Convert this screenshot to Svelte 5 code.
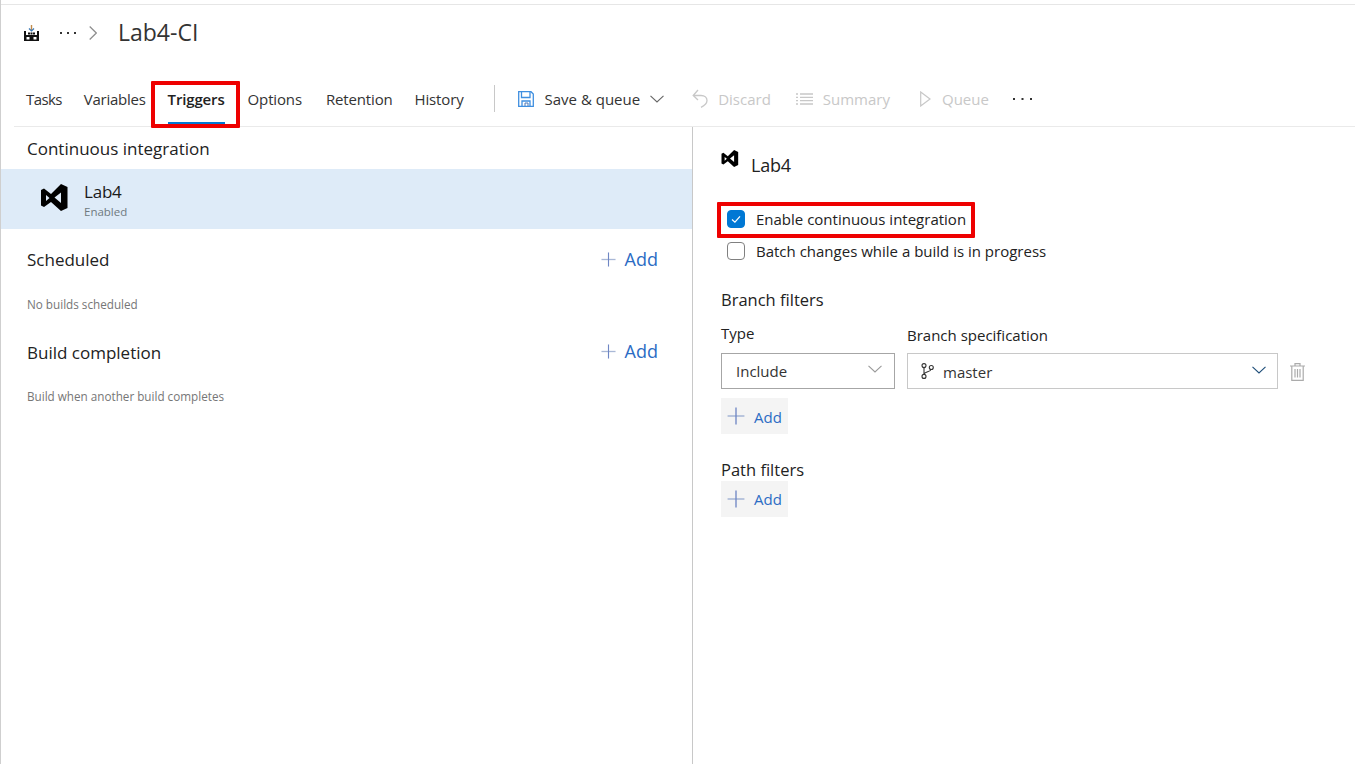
<script>
  const tabs = [
    { label: "Tasks" },
    { label: "Variables" },
    { label: "Triggers", active: true },
    { label: "Options" },
    { label: "Retention" },
    { label: "History" },
  ];
</script>

{#snippet vsLogo(cls)}
  <svg class={cls} viewBox="0 0 27 27" aria-hidden="true">
    <path fill="#000" fill-rule="evenodd" d="M20 0 L26.500 3 V24 L20 27 L10 18 L3 23 L0 21.500 V6 L3 4.500 L10 10 Z M20 8.500 L13.500 13.500 L20 19 Z M5 11 V17 L8.500 14 Z"/>
  </svg>
{/snippet}

{#snippet plus()}
  <svg class="plus" viewBox="0 0 16 16" aria-hidden="true">
    <path d="M0.500 8 H15.500" stroke="#a9b8d6" stroke-width="1.400"/>
    <path d="M8 0.500 V15.500" stroke="#6f86c4" stroke-width="1.200"/>
  </svg>
{/snippet}

{#snippet chevron(color)}
  <svg class="chev" viewBox="0 0 14 8" aria-hidden="true">
    <path d="M0.500 0.800 L7 7 L13.500 0.800" fill="none" stroke={color} stroke-width="1.100"/>
  </svg>
{/snippet}

<div class="page">
  <header class="crumbs">
    <svg class="build-icon" viewBox="0 0 15 16" aria-hidden="true">
      <path d="M7.500 0 V5.500" stroke="#c08a4a" stroke-width="1.400"/>
      <path d="M5 3.500 L7.500 6 L10 3.500" fill="none" stroke="#3a78b5" stroke-width="1.200"/>
      <path fill="#111" d="M0 6 H2 V10 H13 V6 H15 V16 H0 Z M4 7.500 h2 v2 h-2 z M6.500 7.500 h2 v2 h-2 z M9 7.500 h2 v2 h-2 z"/>
      <path fill="#fff" d="M2.500 12 h3 v2.500 h-3 z M9.500 12 h3 v2.500 h-3 z"/>
    </svg>
    <svg class="crumb-more" viewBox="0 0 16 2" aria-hidden="true">
      <path fill="#333" d="M0 0 h2 v2 h-2 z M7 0 h2 v2 h-2 z M14 0 h2 v2 h-2 z"/>
    </svg>
    <svg class="crumb-sep" viewBox="0 0 8 14" aria-hidden="true">
      <path d="M0.700 0.500 L7.300 7 L0.700 13.500" fill="none" stroke="#8d8d8d" stroke-width="1.200"/>
    </svg>
    <span class="title">Lab4-CI</span>
  </header>

  <nav class="toolbar">
    <div class="tabs">
      {#each tabs as tab}
        <div class="tab" class:active={tab.active}>{tab.label}</div>
      {/each}
    </div>
    <div class="divider"></div>
    <div class="actions">
      <div class="action save">
        <svg class="act-icon" viewBox="0 0 16 16" aria-hidden="true">
          <g fill="none" stroke="#3f8fe0" stroke-width="1.300">
            <path d="M0.700 0.700 H13 L15.300 3 V15.300 H0.700 Z"/>
            <path d="M3.500 1 V6.500 H12 V1"/>
            <path d="M4 15 V10 H12 V15"/>
            <path d="M7 15 V12 H10 V15" stroke="#4d79b8" stroke-width="1"/>
          </g>
        </svg>
        <span>Save &amp; queue</span>
        {@render chevron("#666")}
      </div>
      <div class="action off discard">
        <svg class="act-icon" viewBox="0 0 16 19" aria-hidden="true">
          <path d="M1.500 6.500 H9 C13 6.500 15 9 15 11.500 C15 14.500 12.500 16.500 9 18.300 M6 1 L1.200 6.500 L6 11" fill="none" stroke="#c8c8c8" stroke-width="1.300"/>
        </svg>
        <span>Discard</span>
      </div>
      <div class="action off summary">
        <svg class="act-icon" viewBox="0 0 17 12" aria-hidden="true">
          <path d="M0 1 H2 M4 1 H17 M0 4.300 H2 M4 4.300 H17 M0 7.600 H2 M4 7.600 H17 M0 11 H2 M4 11 H17" stroke="#c8c8c8" stroke-width="1.300"/>
        </svg>
        <span>Summary</span>
      </div>
      <div class="action off queue">
        <svg class="act-icon" viewBox="0 0 11 16" aria-hidden="true">
          <path d="M0.700 1 L10 8 L0.700 15 Z" fill="none" stroke="#c8c8c8" stroke-width="1.200"/>
        </svg>
        <span>Queue</span>
      </div>
      <svg class="tool-more" viewBox="0 0 19 2" aria-hidden="true">
        <path fill="#333" d="M0 0 h2 v2 h-2 z M8.500 0 h2 v2 h-2 z M17 0 h2 v2 h-2 z"/>
      </svg>
    </div>
  </nav>

  <main class="split">
    <section class="left">
      <h2 class="left-head ci-head">Continuous integration</h2>
      <div class="ci-row">
        {@render vsLogo("vs-big")}
        <div class="ci-text">
          <div class="ci-name">Lab4</div>
          <div class="ci-state">Enabled</div>
        </div>
      </div>

      <div class="group scheduled">
        <div class="group-head">
          <h2 class="left-head">Scheduled</h2>
          <div class="add-link">{@render plus()}<span>Add</span></div>
        </div>
        <p class="hint">No builds scheduled</p>
      </div>

      <div class="group completion">
        <div class="group-head">
          <h2 class="left-head">Build completion</h2>
          <div class="add-link">{@render plus()}<span>Add</span></div>
        </div>
        <p class="hint">Build when another build completes</p>
      </div>
    </section>

    <section class="right">
      <div class="detail-head">
        {@render vsLogo("vs-small")}
        <span>Lab4</span>
      </div>

      <label class="check first">
        <span class="box on">
          <svg viewBox="0 0 18 18" aria-hidden="true"><path d="M4.500 9.500 L7.800 12.500 L13.500 6" fill="none" stroke="#fff" stroke-width="1.400"/></svg>
        </span>
        <span>Enable continuous integration</span>
      </label>
      <label class="check second">
        <span class="box"></span>
        <span>Batch changes while a build is in progress</span>
      </label>

      <h3 class="sub-head branch-head">Branch filters</h3>
      <div class="filter-row">
        <div class="field type-field">
          <div class="field-label type-label">Type</div>
          <div class="select type-select">
            <span>Include</span>
            {@render chevron("#9a9a9a")}
          </div>
        </div>
        <div class="field branch-field">
          <div class="field-label">Branch specification</div>
          <div class="select branch-select">
            <svg class="branch-icon" viewBox="0 0 13 16" aria-hidden="true">
              <g fill="none" stroke="#333" stroke-width="1.100">
                <circle cx="3" cy="2.600" r="2"/>
                <circle cx="3" cy="13.400" r="2"/>
                <circle cx="10.300" cy="4.500" r="2"/>
                <path d="M3 4.600 V11.400 M10 6.500 C9.500 9 4 8.500 3 11"/>
              </g>
            </svg>
            <span>master</span>
            <span class="spacer"></span>
            {@render chevron("#1f4e79")}
          </div>
        </div>
        <svg class="trash" viewBox="0 0 15 18" aria-hidden="true">
          <g fill="none" stroke="#ababab" stroke-width="1.200">
            <path d="M0 3 H15 M5 3 V0.700 H10 V3 M1.800 3 V17.300 H13.200 V3"/>
            <path d="M5 6 V14.500 M7.500 6 V14.500 M10 6 V14.500"/>
          </g>
        </svg>
      </div>
      <div class="add-btn branch-add">{@render plus()}<span>Add</span></div>

      <h3 class="sub-head path-head">Path filters</h3>
      <div class="add-btn">{@render plus()}<span>Add</span></div>
    </section>
  </main>

  <div class="mark mark-tab"></div>
  <div class="mark mark-check"></div>
</div>

<style>
  :global(body) {
    margin: 0;
    background: #fff;
    font-family: "Open Sans", "Noto Sans", sans-serif;
    color: #222;
  }
  .page {
    position: relative;
    box-sizing: border-box;
    height: 764px;
    width: 1355px;
    overflow: hidden;
    padding-top: 4px;
    border-left: 1px solid #cfcfcf;
  }
  .crumbs {
    box-sizing: border-box;
    height: 57px;
    border-top: 1px solid #e6e6e6;
    margin-left: -1px;
    display: flex;
    align-items: center;
    padding: 0 0 0 24px;
  }
  .build-icon { width: 15px; height: 16px; margin-right: 21px; }
  .crumb-more { width: 16px; height: 2px; display: block; }
  .crumb-sep { width: 8px; height: 14px; margin: 0 21px 0 13px; }
  .title { font-size: 23px; color: #333; margin-top: -2px; }

  .toolbar {
    box-sizing: border-box;
    height: 66px;
    margin-left: 13px;
    border-bottom: 1px solid #eaeaea;
    display: flex;
    align-items: center;
    padding-top: 13px;
  }
  .tabs { display: flex; align-items: stretch; height: 48px; margin-left: 12px; }
  .tab {
    box-sizing: border-box;
    font-size: 15px;
    letter-spacing: -0.15px;
    color: #333;
    display: flex;
    align-items: center;
    position: relative;
    margin-right: 22px;
    padding-bottom: 2px;
  }
  .tab:nth-child(1) { letter-spacing: -0.6px; margin-right: 22px; }
  .tab:nth-child(2) { letter-spacing: -0.25px; }
  .tab:nth-child(3) { margin-right: 23px; }
  .tab:nth-child(4) { margin-right: 24px; }
  .tab.active { font-weight: 600; color: #222; }
  .tab.active::after {
    content: "";
    position: absolute;
    left: 0;
    right: 0;
    bottom: 0;
    height: 2px;
    background: #0078d4;
  }
  .divider { width: 1px; height: 27px; background: #c8c8c8; margin: -3px 23px 0 8px; }
  .actions { display: flex; align-items: center; font-size: 15px; margin-top: -2px; }
  .action { display: flex; align-items: center; color: #333; }
  .action.off { color: #c8c8c8; }
  .act-icon { display: block; }
  .save .act-icon { width: 16px; height: 16px; margin-right: 11px; }
  .chev { width: 14px; height: 8px; margin-left: 10px; display: block; }
  .discard { margin-left: 28px; }
  .discard .act-icon { width: 16px; height: 19px; margin-right: 10px; margin-top: -2px; }
  .summary { margin-left: 25px; }
  .summary .act-icon { width: 17px; height: 12px; margin-right: 10px; }
  .queue { margin-left: 30px; }
  .queue .act-icon { width: 11px; height: 16px; margin-right: 11px; }
  .tool-more { width: 19px; height: 2px; margin-left: 24px; display: block; }

  .split { display: flex; height: 637px; }
  .left {
    box-sizing: border-box;
    width: 692px;
    border-right: 1px solid #c8c8c8;
  }
  .left-head {
    margin: 0;
    font-size: 17px;
    font-weight: 400;
    color: #222;
    line-height: 24px;
  }
  .ci-head { padding: 10px 0 8px 26px; }
  .ci-row {
    height: 60px;
    box-sizing: border-box;
    background: #deebf8;
    display: flex;
    align-items: center;
    padding-left: 40px;
  }
  .vs-big { width: 27px; height: 27px; margin-right: 16px; margin-top: -3px; }
  .ci-text { margin-top: 4px; }
  .ci-name { font-size: 17px; line-height: 22px; color: #1a1a1a; letter-spacing: -0.2px; }
  .ci-state { font-size: 11.500px; line-height: 18px; color: #6f7a80; }
  .group { padding-left: 26px; }
  .scheduled { padding-top: 19px; }
  .completion { padding-top: 29px; }
  .scheduled .hint { margin-top: 24px; }
  .group-head { display: flex; align-items: center; justify-content: space-between; height: 24px; padding-right: 34px; }
  .add-link { display: flex; align-items: center; color: #2b6cc4; font-size: 18px; margin-top: -2px; }
  .completion .add-link { margin-top: -4px; }
  .add-link .plus { width: 15px; height: 15px; margin-right: 9px; }
  .hint { margin: 23px 0 0; font-size: 11.700px; line-height: 16px; color: #767676; }

  .right { flex: 1; padding-left: 28px; }
  .detail-head { display: flex; align-items: flex-start; height: 50px; padding-top: 23px; font-size: 18px; letter-spacing: -0.2px; color: #222; }
  .vs-small { width: 18px; height: 17px; margin-right: 12px; }
  .detail-head span { margin-top: 2px; line-height: 26px; }
  .check { display: flex; align-items: center; font-size: 15px; height: 24px; padding-left: 6px; color: #222; }
  .check.first { margin-top: 7px; }
  .check.second { margin-top: 8px; }
  .box {
    box-sizing: border-box;
    width: 18px;
    height: 18px;
    border: 1px solid #808080;
    border-radius: 4px;
    margin-right: 11px;
    display: block;
  }
  .box.on { background: #0078d4; border-color: #0078d4; }
  .box.on svg { display: block; width: 16px; height: 16px; }
  .sub-head { margin: 0; font-size: 16.500px; font-weight: 400; line-height: 22px; color: #222; }
  .branch-head { margin-top: 26px; }
  .filter-row { display: flex; align-items: flex-end; margin-top: 12px; }
  .field-label { font-size: 15px; line-height: 20px; color: #222; margin-bottom: 8px; }
  .type-label { margin-bottom: 10px; }
  .type-field { width: 174px; margin-right: 12px; }
  .branch-field { width: 371px; }
  .select {
    box-sizing: border-box;
    height: 36px;
    display: flex;
    align-items: center;
    font-size: 15px;
    color: #333;
  }
  .type-select { border: 1px solid #a6a6a6; justify-content: space-between; padding: 0 12px 0 14px; }
  .type-select .chev { margin-top: -5px; }
  .branch-select { border: 1px solid #c8c8c8; padding: 0 11px 0 13px; }
  .branch-select .chev { margin-top: -2px; }
  .branch-select > span { margin-top: 2px; }
  .branch-icon { width: 13px; height: 16px; margin-right: 9px; }
  .spacer { flex: 1; }
  .trash { width: 15px; height: 18px; margin: 0 0 8px 12px; }
  .add-btn {
    box-sizing: border-box;
    width: 67px;
    height: 36px;
    background: #f4f4f4;
    display: flex;
    align-items: center;
    padding-left: 6px;
    margin-top: 9px;
    color: #2b6cc4;
    font-size: 15px;
  }
  .add-btn .plus { width: 18px; height: 18px; margin-right: 9px; }
  .branch-add span { margin-top: 2px; }
  .path-head { margin-top: 25px; }
  .path-head + .add-btn { margin-top: 0; }

  .mark { position: absolute; box-sizing: border-box; border: 4px solid #ee0000; border-radius: 1px; }
  .mark-tab { left: 150px; top: 81px; width: 89px; height: 47px; }
  .mark-check { left: 716px; top: 202px; width: 258px; height: 36px; }
</style>
